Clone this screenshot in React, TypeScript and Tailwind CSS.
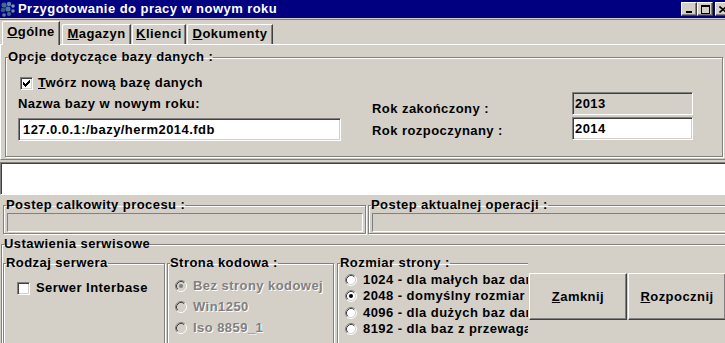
import React from "react";

const sunken =
  "border border-t-[#808080] border-l-[#808080] border-b-white border-r-white shadow-[inset_1px_1px_0_#404040,inset_-1px_-1px_0_#d4d0c8]";
const raised =
  "border border-t-white border-l-white border-b-[#404040] border-r-[#404040] shadow-[inset_-1px_-1px_0_#808080]";
const etched = "border border-[#808080] shadow-[inset_1px_1px_0_#fff,1px_1px_0_#fff]";

function Group({
  label,
  className = "",
  border = etched,
  children,
}: {
  label: React.ReactNode;
  className?: string;
  border?: string;
  children?: React.ReactNode;
}) {
  return (
    <fieldset className={`min-w-0 ${border} ${className}`}>
      <legend className="ml-[2px] h-[16px] leading-[16px] whitespace-nowrap">{label}</legend>
      {children}
    </fieldset>
  );
}

function Check({ checked }: { checked?: boolean }) {
  const cols = [2, 3, 4, 3, 2, 1, 0];
  return (
    <span className={`w-[13px] h-[13px] bg-white ${sunken} flex items-center justify-center shrink-0`}>
      {checked && (
        <svg width="7" height="7" viewBox="0 0 7 7" shapeRendering="crispEdges">
          {cols.map((y, x) => (
            <rect key={x} x={x} y={y} width="1" height="3" fill="#000" />
          ))}
        </svg>
      )}
    </span>
  );
}

function Radio({ checked, disabled }: { checked?: boolean; disabled?: boolean }) {
  return (
    <svg width="12" height="12" viewBox="0 0 12 12" className="shrink-0">
      <circle cx="6" cy="6" r="5" fill={disabled ? "#d4d0c8" : "#fff"} />
      <path d="M2.11 9.89 A5.5 5.5 0 0 1 9.89 2.11" stroke="#808080" fill="none" />
      <path d="M9.89 2.11 A5.5 5.5 0 0 1 2.11 9.89" stroke="#fff" fill="none" />
      <path d="M2.82 9.18 A4.5 4.5 0 0 1 9.18 2.82" stroke="#404040" fill="none" />
      <path d="M9.18 2.82 A4.5 4.5 0 0 1 2.82 9.18" stroke="#d4d0c8" fill="none" />
      {checked && <circle cx="6" cy="6" r="2" fill={disabled ? "#808080" : "#000"} />}
    </svg>
  );
}

function TitleButton({ children }: { children: React.ReactNode }) {
  return (
    <div className={`w-[16px] h-[14px] bg-[#d4d0c8] ${raised} flex items-center justify-center`}>
      {children}
    </div>
  );
}

function AppIcon() {
  const dots: [number, number, number, string][] = [
    [4, 4, 2.6, "#3f6f8f"],
    [9, 3, 2.2, "#5b86a3"],
    [13, 5, 1.8, "#7b9cb4"],
    [3, 9, 2.2, "#335d7a"],
    [8, 8, 2.6, "#4c7a98"],
    [13, 10, 1.8, "#6b8fa8"],
    [4, 14, 1.8, "#5a7c94"],
    [9, 13, 2, "#3d6a86"],
  ];
  return (
    <svg width="16" height="17" viewBox="0 0 16 17" className="shrink-0">
      {dots.map(([cx, cy, r, c], i) => (
        <circle key={i} cx={cx} cy={cy} r={r} fill={c} />
      ))}
    </svg>
  );
}

function Tab({
  children,
  active,
  className = "",
}: {
  children: React.ReactNode;
  active?: boolean;
  className?: string;
}) {
  return (
    <div
      className={`bg-[#d4d0c8] border-l border-t border-white border-r border-r-[#404040] rounded-tl-[2px] shadow-[inset_-1px_0_0_#808080] flex justify-center whitespace-nowrap ${
        active ? "h-[24px] -mb-px pt-[2px] relative z-10" : "h-[20px] pt-[1px]"
      } ${className}`}
    >
      {children}
    </div>
  );
}

export default function App() {
  return (
    <div className="w-[725px] h-[343px] overflow-hidden bg-[#d4d0c8] font-['Liberation_Sans',Arial,sans-serif] font-bold text-[13px] leading-[16px] tracking-[0.45px] text-black select-none">
      {/* Title bar */}
      <div className="h-[18px] bg-[#000080] flex items-center">
        <AppIcon />
        <span className="ml-[2px] text-white">Przygotowanie do pracy w nowym roku</span>
        <div className="ml-auto -mr-[6px] flex items-center">
          <TitleButton>
            <svg width="8" height="8" viewBox="0 0 8 8" shapeRendering="crispEdges">
              <rect x="1" y="6" width="6" height="2" fill="#000" />
            </svg>
          </TitleButton>
          <TitleButton>
            <svg width="9" height="9" viewBox="0 0 9 9" shapeRendering="crispEdges">
              <rect x="0.5" y="0.5" width="8" height="8" fill="none" stroke="#000" />
              <rect x="0" y="1" width="9" height="1" fill="#000" />
            </svg>
          </TitleButton>
          <div className="ml-[2px]">
            <TitleButton>
              <svg width="8" height="7" viewBox="0 0 8 7">
                <path d="M0.5 0.5 L7.5 6.5 M7.5 0.5 L0.5 6.5" stroke="#000" strokeWidth="1.6" />
              </svg>
            </TitleButton>
          </div>
        </div>
      </div>
      <div className="h-px mt-px bg-[#808080]" />

      {/* Tabs */}
      <div className="h-[24px] flex items-end pl-[2px]">
        <Tab active className="w-[58px]">
          <span>
            <u>O</u>gólne
          </span>
        </Tab>
        <Tab className="w-[69px] ml-[2px]">
          <span>
            <u>M</u>agazyn
          </span>
        </Tab>
        <Tab className="w-[54px] ml-[1px]">
          <span>
            <u>K</u>lienci
          </span>
        </Tab>
        <Tab className="w-[86px] ml-[1px]">
          <span>
            <u>D</u>okumenty
          </span>
        </Tab>
      </div>

      {/* Tab panel */}
      <div className="border-t border-l border-white border-b border-b-[#808080] pt-[4px] pb-[2px] pl-[4px]">
        <Group label="Opcje dotyczące bazy danych :" className="w-[718px] h-[108px]">
          <div className="flex">
            <div className="ml-[12px] w-[323px] flex flex-col">
              <div className="mt-[10px] h-[16px] flex items-center">
                <span className="ml-[2px]">
                  <Check checked />
                </span>
                <span className="ml-[5px]">
                  <u>T</u>wórz nową bazę danych
                </span>
              </div>
              <div className="mt-[5px] h-[16px]">Nazwa bazy w nowym roku:</div>
              <div className={`mt-[6px] h-[23px] bg-white ${sunken} pl-[4px] flex items-center`}>
                127.0.0.1:/bazy/herm2014.fdb
              </div>
            </div>
            <div className="ml-[31px] w-[200px] flex flex-col">
              <div className="mt-[36px] h-[16px]">Rok zakończony :</div>
              <div className="mt-[6px] h-[16px]">Rok rozpoczynany :</div>
            </div>
            <div className="w-[121px] flex flex-col">
              <div className={`mt-[27px] h-[23px] bg-[#d4d0c8] ${sunken} pl-[2px] flex items-center`}>2013</div>
              <div className={`mt-[2px] h-[23px] bg-white ${sunken} pl-[2px] flex items-center`}>2014</div>
            </div>
          </div>
        </Group>
      </div>

      {/* Status area */}
      <div className="mt-[2px] h-[33px] bg-white border-t border-l border-t-[#808080] border-l-[#808080] border-b border-b-white shadow-[inset_1px_1px_0_#404040]" />

      {/* Progress groups */}
      <div className="mt-[2px] pl-[3px] flex">
        <Group label="Postep calkowity procesu :" className="w-[363px] h-[37px] shrink-0">
          <div className="ml-[3px] mr-[2px] h-[19px] border border-t-[#808080] border-l-[#808080] border-b-white border-r-white" />
        </Group>
        <Group label="Postep aktualnej operacji :" className="ml-[2px] w-[362px] h-[37px] shrink-0">
          <div className="ml-[3px] mr-[2px] h-[19px] border border-t-[#808080] border-l-[#808080] border-b-white border-r-white" />
        </Group>
      </div>

      {/* Service settings */}
      <div className="mt-[2px] ml-[1px]">
        <Group label="Ustawienia serwisowe" className="w-[740px] h-[130px]">
          <div className="mt-[3px] flex items-start">
            <Group label="Rodzaj serwera" className="ml-[1px] w-[162px] h-[100px] shrink-0">
              <div className="mt-[9px] ml-[13px] h-[16px] flex items-center">
                <Check />
                <span className="ml-[6px]">Serwer Interbase</span>
              </div>
            </Group>
            <Group label="Strona kodowa :" className="ml-[2px] w-[167px] h-[100px] shrink-0">
              <div className="mt-[7px] ml-[7px] flex flex-col gap-[5px] text-[#808080] [text-shadow:1px_1px_0_#fff]">
                <div className="h-[16px] flex items-center">
                  <Radio checked disabled />
                  <span className="ml-[6px]">Bez strony kodowej</span>
                </div>
                <div className="h-[16px] flex items-center">
                  <Radio disabled />
                  <span className="ml-[6px]">Win1250</span>
                </div>
                <div className="h-[16px] flex items-center">
                  <Radio disabled />
                  <span className="ml-[6px]">Iso 8859_1</span>
                </div>
              </div>
            </Group>
            <Group
              label="Rozmiar strony :"
              border="border border-[#808080] border-r-0 shadow-[inset_1px_1px_0_#fff,0_1px_0_#fff]"
              className="ml-[3px] w-[191px] h-[100px] shrink-0 overflow-hidden"
            >
              <div className="mt-[1px] ml-[7px] flex flex-col whitespace-nowrap">
                <div className="h-[16px] flex items-center">
                  <Radio />
                  <span className="ml-[6px]">1024 - dla małych baz danych</span>
                </div>
                <div className="h-[16px] flex items-center">
                  <Radio checked />
                  <span className="ml-[6px]">2048 - domyślny rozmiar</span>
                </div>
                <div className="h-[17px] flex items-center">
                  <Radio />
                  <span className="ml-[6px]">4096 - dla dużych baz danych</span>
                </div>
                <div className="h-[16px] flex items-center">
                  <Radio />
                  <span className="ml-[6px]">8192 - dla baz z przewagą</span>
                </div>
              </div>
            </Group>
            <div className="ml-[1px] mt-[18px] flex gap-[1px] shrink-0">
              <button className={`w-[98px] h-[47px] bg-[#d4d0c8] ${raised} flex items-center justify-center`}>
                <span>
                  <u>Z</u>amknij
                </span>
              </button>
              <button className={`w-[98px] h-[47px] bg-[#d4d0c8] ${raised} flex items-center justify-center`}>
                <span>
                  <u>R</u>ozpocznij
                </span>
              </button>
            </div>
          </div>
        </Group>
      </div>
    </div>
  );
}
